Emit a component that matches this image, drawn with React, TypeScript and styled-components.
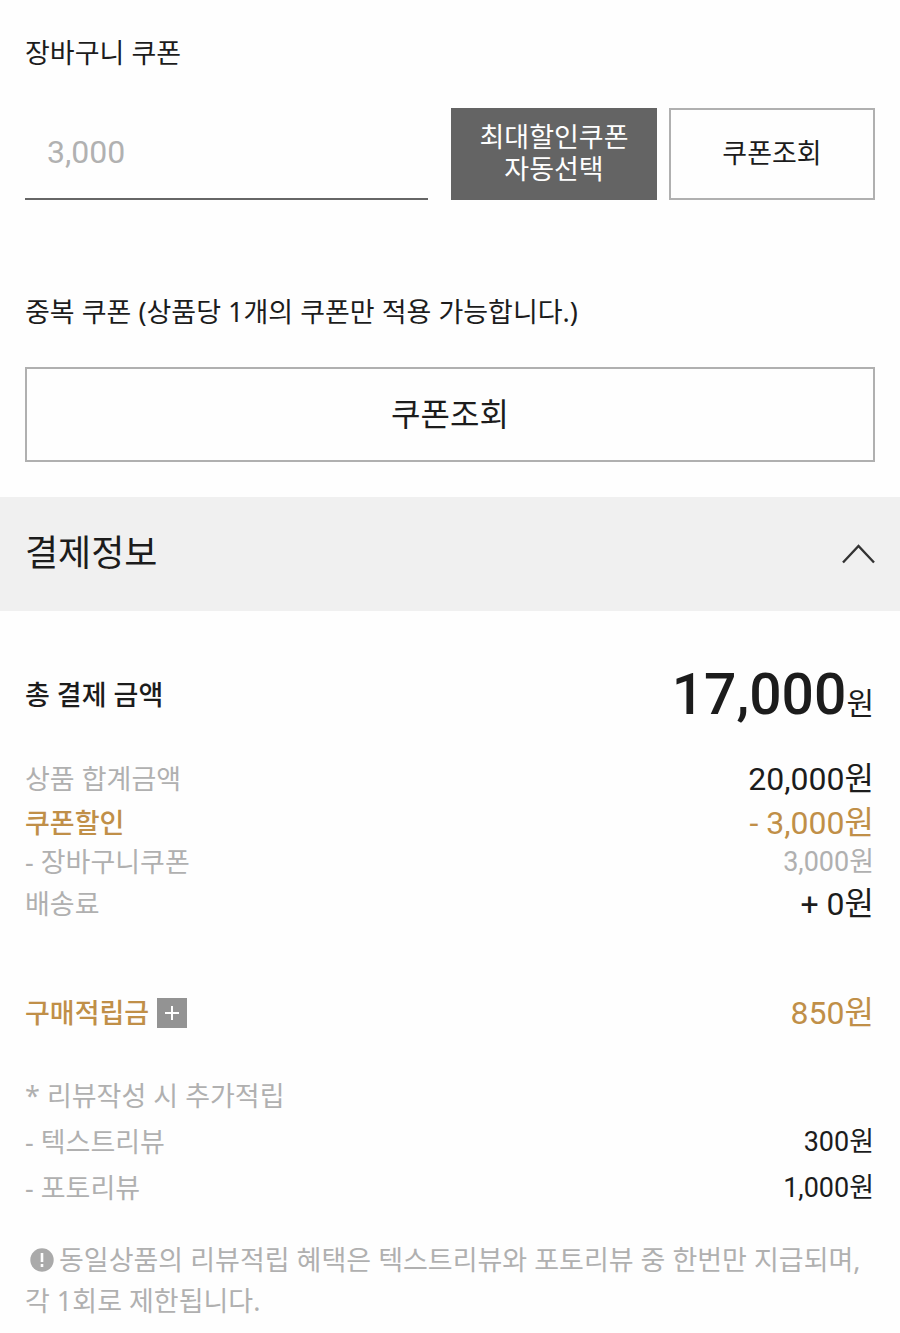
import React from "react";
import styled, { createGlobalStyle } from "styled-components";

const labelFont = `"Noto Sans", "Noto Sans CJK KR", sans-serif`;

const GlobalStyle = createGlobalStyle`
  * { box-sizing: border-box; }
  body {
    margin: 0;
    background: #fefefe;
    color: #1c1c1c;
    font-family: Roboto, "Noto Sans CJK KR", sans-serif;
  }
  h2, h3, p, dl, dt, dd { margin: 0; font-weight: 400; }
  button, input { font: inherit; color: inherit; border-radius: 0; }
`;

const Coupons = styled.section`
  padding: 33px 25px 35px;
`;
const CouponLabel = styled.label`
  display: block;
  font-family: ${labelFont};
  font-size: 27px;
  line-height: 40px;
`;
const CouponTitle = styled.h3`
  margin-top: 92px;
  font-family: ${labelFont};
  font-size: 27px;
  line-height: 40px;
`;
const CouponRow = styled.div`
  display: flex;
  margin-top: 35px;
  height: 92px;
`;
const Amount = styled.input`
  flex: 1;
  min-width: 0;
  margin-right: 23px;
  padding: 0 22px 2px;
  border: 0;
  border-bottom: 2px solid #666;
  background: transparent;
  color: #b1b1b1;
  font-size: 32px;
`;
const Button = styled.button<{ $dark?: boolean; $wide?: boolean }>`
  width: ${(p) => (p.$wide ? "100%" : "206px")};
  height: ${(p) => (p.$wide ? "95px" : "92px")};
  margin-top: ${(p) => (p.$wide ? "35px" : "0")};
  padding: 0;
  border: 2px solid ${(p) => (p.$dark ? "#646464" : "#b0b0b0")};
  background: ${(p) => (p.$dark ? "#646464" : "#fefefe")};
  color: ${(p) => (p.$dark ? "#fefefe" : "#1c1c1c")};
  font-size: ${(p) => (p.$wide ? "32px" : "27px")};
  line-height: 32px;
  & + & { margin-left: 12px; }
`;
const SectionHeader = styled.header`
  display: flex;
  align-items: center;
  justify-content: space-between;
  height: 114px;
  padding: 0 25px;
  background: #f0f0f0;
`;
const SectionTitle = styled.h2`
  font-size: 36px;
  line-height: 52px;
`;
const Toggle = styled.button`
  display: flex;
  padding: 0;
  border: 0;
  background: none;
`;
const Payment = styled.section`
  padding: 48px 26px 12px 25px;
`;
const Total = styled.div`
  display: flex;
  justify-content: space-between;
  align-items: center;
  height: 72px;
  margin-bottom: 26px;
`;
const TotalLabel = styled.h3`
  font-family: ${labelFont};
  font-size: 27px;
  font-weight: 500;
  line-height: 40px;
`;
const TotalValue = styled.p`
  padding-top: 8px;
  font-size: 30px;
  line-height: 60px;
`;
const TotalNumber = styled.strong`
  font-size: 57px;
  font-weight: 500;
`;
const List = styled.dl<{ $gap: number }>`
  margin-bottom: ${(p) => p.$gap}px;
`;
type Tone = "muted" | "gold" | "dark";
const tones = { muted: "#b0b0b0", gold: "#c08f48", dark: "#1c1c1c" };
const Row = styled.div<{ $height: number }>`
  display: flex;
  align-items: center;
  justify-content: space-between;
  height: ${(p) => p.$height}px;
`;
const Term = styled.dt<{ $tone?: Tone }>`
  display: flex;
  align-items: center;
  gap: 8px;
  color: ${(p) => tones[p.$tone ?? "muted"]};
  font-family: ${labelFont};
  font-size: 27px;
  font-weight: ${(p) => (p.$tone === "gold" ? 500 : 400)};
  line-height: 40px;
`;
const Value = styled.dd<{ $tone?: Tone; $small?: boolean }>`
  color: ${(p) => tones[p.$tone ?? "dark"]};
  font-size: ${(p) => (p.$small ? "27px" : "32px")};
  line-height: 40px;
`;
const PlusButton = styled.button`
  display: flex;
  padding: 0;
  border: 0;
  background: #939393;
`;
const Muted = styled.p`
  color: #b0b0b0;
  font-family: ${labelFont};
  font-size: 27px;
  line-height: 46px;
`;
const Notice = styled(Muted)`
  line-height: 41px;
  padding-top: 28px;
`;
const NoticeIcon = styled.svg`
  margin: 0 5px;
  vertical-align: -2px;
`;

export default function App() {
  return (
    <main>
      <GlobalStyle />
      <Coupons>
        <CouponLabel htmlFor="coupon">장바구니 쿠폰</CouponLabel>
        <CouponRow>
          <Amount id="coupon" defaultValue="3,000" />
          <Button $dark type="button">최대할인쿠폰<br />자동선택</Button>
          <Button type="button">쿠폰조회</Button>
        </CouponRow>
        <CouponTitle>중복 쿠폰 (상품당 1개의 쿠폰만 적용 가능합니다.)</CouponTitle>
        <Button $wide type="button">쿠폰조회</Button>
      </Coupons>
      <SectionHeader>
        <SectionTitle>결제정보</SectionTitle>
        <Toggle type="button" aria-label="결제정보 접기">
          <svg width="33" height="20" viewBox="0 0 33 20" fill="none" stroke="#333" strokeWidth="2.4">
            <path d="M1 18.5 16.5 2 32 18.5" />
          </svg>
        </Toggle>
      </SectionHeader>
      <Payment>
        <Total>
          <TotalLabel>총 결제 금액</TotalLabel>
          <TotalValue><TotalNumber>17,000</TotalNumber>원</TotalValue>
        </Total>
        <List $gap={62}>
          <Row $height={44}><Term>상품 합계금액</Term><Value>20,000원</Value></Row>
          <Row $height={44}><Term $tone="gold">쿠폰할인</Term><Value $tone="gold">- 3,000원</Value></Row>
          <Row $height={34}><Term>- 장바구니쿠폰</Term><Value $tone="muted" $small>3,000원</Value></Row>
          <Row $height={50}><Term>배송료</Term><Value>+ 0원</Value></Row>
        </List>
        <List $gap={38}>
          <Row $height={44}>
            <Term $tone="gold">
              구매적립금
              <PlusButton type="button" aria-label="적립금 상세">
                <svg width="30" height="30" viewBox="0 0 30 30" stroke="#fff" strokeWidth="2">
                  <path d="M8 15h14M15 8v14" />
                </svg>
              </PlusButton>
            </Term>
            <Value $tone="gold">850원</Value>
          </Row>
        </List>
        <Muted>* 리뷰작성 시 추가적립</Muted>
        <List $gap={0}>
          <Row $height={46}><Term>- 텍스트리뷰</Term><Value $small>300원</Value></Row>
          <Row $height={46}><Term>- 포토리뷰</Term><Value $small>1,000원</Value></Row>
        </List>
        <Notice>
          <NoticeIcon width="24" height="24" viewBox="0 0 24 24" aria-hidden="true">
            <circle cx="12" cy="12" r="11.7" fill="#aaa" />
            <path d="M12 5v9M12 16v3" stroke="#fefefe" strokeWidth="2.6" />
          </NoticeIcon>
          동일상품의 리뷰적립 혜택은 텍스트리뷰와 포토리뷰 중 한번만 지급되며, 각 1회로 제한됩니다.
        </Notice>
      </Payment>
    </main>
  );
}
